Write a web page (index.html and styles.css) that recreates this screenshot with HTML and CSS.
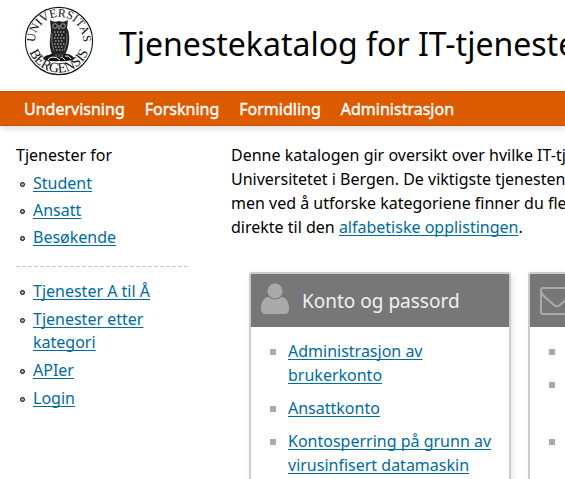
FILE: index.html
```html
<!DOCTYPE html>
<html lang="nb">
<head>
<meta charset="utf-8">
<title>Tjenestekatalog</title>
<link rel="stylesheet" href="styles.css">
</head>
<body>
<header class="masthead">
  <svg class="logo" viewBox="0 0 70 70" role="img" aria-label="Universitas Bergensis">
    <circle cx="35" cy="35" r="33.600" fill="#fff" stroke="#111" stroke-width="1.100"/>
    <path id="seal-top" fill="none" d="M12.400 43 A24 24 0 1 1 57.600 43"/>
    <path id="seal-bottom" fill="none" d="M3.500 35 A31.500 31.500 0 0 0 66.500 35"/>
    <text class="seal" text-anchor="middle"><textPath href="#seal-top" startOffset="50%">UNIVERSITAS</textPath></text>
    <text class="seal seal-lower" text-anchor="middle"><textPath href="#seal-bottom" startOffset="50%">BERGENSIS</textPath></text>
    <path fill="#111" d="M19 53 Q21 49 25 49 Q29 46 34 48 Q39 46 43 48 Q47 48 51 53 L47 54 Q41 56 35 55 Q28 56 22 54 Z"/>
    <path fill="none" stroke="#fff" stroke-width="1" d="M24 54 Q25 51 29 51 Q33 51 36 54 M34 50 Q39 51 41 54 M41 50 Q45 49 47 53"/>
    <path fill="#222" d="M26 14 Q30 17 35 15 Q40 17 44 14 L43 22 Q46 27 45 36 Q44 44 41 48 L39 51 L31 51 L28 48 Q25 41 26 34 L27 24 Z"/>
    <circle cx="31" cy="20" r="2.300" fill="#222" stroke="#ddd" stroke-width=".7"/>
    <circle cx="39" cy="20" r="2.300" fill="#222" stroke="#ddd" stroke-width=".7"/>
    <path fill="none" stroke="#ddd" stroke-width="1" stroke-dasharray="1.500 1.500" d="M30 26 H41 M31 29 H40 M30 32 H41 M31 35 H40 M30 38 H41 M31 41 H40 M32 44 H39"/>
    <path fill="none" stroke="#999" stroke-width=".7" d="M28 27 Q27 37 30 45 M43 27 Q44 37 40 45 M35 19 L34 23 L36 23 Z M32 48 V51 M35 48 V51 M38 48 V51"/>
  </svg>
  <h1 class="site-title">Tjenestekatalog for IT-tjeneste</h1>
</header>
<nav class="topnav">
  <a href="#">Undervisning</a>
  <a href="#">Forskning</a>
  <a href="#">Formidling</a>
  <a href="#">Administrasjon</a>
</nav>
<div class="page">
  <aside class="sidebar">
    <p class="sidebar-title">Tjenester for</p>
    <ul class="side-list">
      <li><a href="#">Student</a></li>
      <li><a href="#">Ansatt</a></li>
      <li><a href="#">Besøkende</a></li>
    </ul>
    <svg class="divider" aria-hidden="true"><line x1="0" y1="50%" x2="100%" y2="50%"/></svg>
    <ul class="side-list side-links">
      <li><a href="#">Tjenester A til Å</a></li>
      <li><a href="#">Tjenester etter kategori</a></li>
      <li><a href="#">APIer</a></li>
      <li><a href="#">Login</a></li>
    </ul>
  </aside>
  <main class="content">
    <p class="intro">Denne katalogen gir oversikt over hvilke IT-tj<br>Universitetet i Bergen. De viktigste tjenesten<br>men ved å utforske kategoriene finner du fle<br>direkte til den <a href="#">alfabetiske opplistingen</a>.</p>
    <div class="cards">
      <section class="card">
        <h2 class="card-head">
          <svg class="icon-user" viewBox="0 0 28 32" aria-hidden="true"><circle cx="14" cy="8" r="7.500"/><path d="M7.500 14 Q14 19 20.500 14 C25.500 14 28 19 28 26 Q28 31 23 31 H5 Q0 31 0 26 C0 19 2.500 14 7.500 14 Z"/></svg>
          Konto og passord
        </h2>
        <ul class="card-list">
          <li><a href="#">Administrasjon av brukerkonto</a></li>
          <li><a href="#">Ansattkonto</a></li>
          <li><a href="#">Kontosperring på grunn av virusinfisert datamaskin</a></li>
        </ul>
      </section>
      <section class="card">
        <h2 class="card-head">
          <svg class="icon-mail" viewBox="0 0 34 28" aria-hidden="true"><rect x="1" y="1" width="32" height="26" rx="2"/><path d="M1 4 Q2 8 6 11 L14 18 Q17 20.500 20 18 L28 11 Q32 8 33 4"/></svg>
        </h2>
        <ul class="card-list">
          <li></li>
          <li class="two-line"></li>
          <li></li>
        </ul>
      </section>
    </div>
  </main>
</div>
</body>
</html>
```

FILE: styles.css
```css
*, *::before { box-sizing: border-box; }

html { overflow: hidden; }

body {
  margin: 0;
  background: #fff;
  color: #000;
  font: 16px/24px "Noto Sans", "Open Sans", sans-serif;
}

ul, p, h1, h2 { margin: 0; padding: 0; }

ul { list-style: none; }

a {
  color: #006b9e;
  text-underline-offset: 2px;
  text-decoration-thickness: 1px;
  text-decoration-skip-ink: none;
}

.masthead {
  display: flex;
  align-items: flex-start;
  gap: 25px;
  padding: 6px 0 15px 24px;
}

.logo { flex: none; width: 70px; height: 70px; }

.seal {
  font-family: "Liberation Serif", serif;
  font-size: 12px;
  fill: #111;
}

.seal-lower { font-size: 14px; }

.site-title {
  padding-top: 14px;
  font-size: 32px;
  line-height: 48px;
  font-weight: 400;
  white-space: nowrap;
}

.topnav {
  display: flex;
  gap: 20px;
  padding: 5px 24px 4px;
  background: #dd5b00;
  border-top: 1px solid #c65200;
  border-bottom: 1px solid #c65200;
  box-shadow: 0 3px 6px rgba(0, 0, 0, 0.12);
}

.topnav a {
  color: #fff;
  -webkit-text-stroke: 0.4px #fff;
  text-decoration: none;
}

.page {
  display: flex;
  gap: 43px;
  padding: 17px 0 0 16px;
}

.sidebar { flex: none; width: 172px; line-height: 23px; }

.sidebar-title { margin-bottom: 4px; line-height: 25px; }

.side-list li {
  position: relative;
  margin-bottom: 4px;
  padding: 0 20px 0 17px;
}

.side-links li { margin-bottom: 5px; }

.side-list li::before {
  content: "";
  position: absolute;
  left: 4px;
  top: 10px;
  width: 5px;
  height: 5px;
  border: 1px solid #000;
  border-radius: 50%;
  background: #aaa;
}

.divider {
  display: block;
  width: 100%;
  height: 1px;
  margin: 17px 0 13px;
  stroke: #c8c8c8;
  stroke-dasharray: 4 2;
}

.content { flex: 1; min-width: 0; }

.intro { white-space: nowrap; }

.cards {
  display: grid;
  grid-template-columns: repeat(2, 262px);
  gap: 17px;
  padding: 33px 18px 0;
}

.card {
  border: 2px solid #ccc;
  border-radius: 3px;
  box-shadow: 2px 2px 6px rgba(0, 0, 0, 0.1);
}

.card-head {
  display: flex;
  align-items: center;
  gap: 13px;
  height: 53px;
  padding: 0 10px;
  background: #777;
  color: #f0f0f0;
  font-size: 19px;
  font-weight: 400;
}

.icon-user { width: 28px; height: 32px; margin-bottom: 4px; fill: #aaa; }

.icon-mail {
  width: 34px;
  height: 28px;
  fill: none;
  stroke: #aaa;
  stroke-width: 2;
}

.card-list { padding: 12px 12px 12px 19px; }

.card-list li {
  position: relative;
  min-height: 24px;
  margin-bottom: 9px;
  padding-left: 18px;
}

.card-list li.two-line { min-height: 48px; }

.card-list li::before {
  content: "";
  position: absolute;
  left: 0;
  top: 10px;
  width: 6px;
  height: 6px;
  background: #aaa;
}
```
